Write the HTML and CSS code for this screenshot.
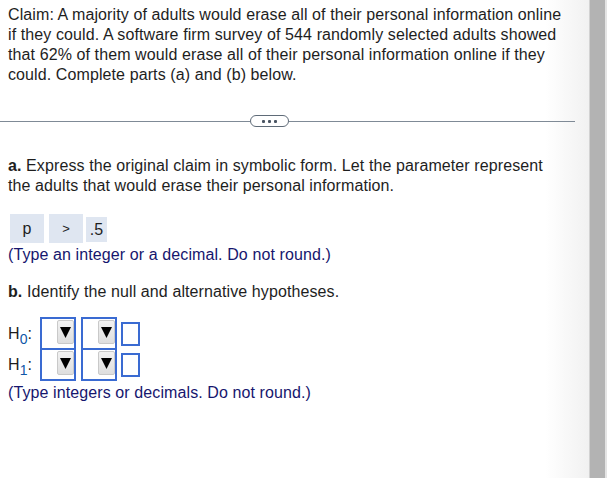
FILE: index.html
```html
<!DOCTYPE html>
<html>
<head>
<meta charset="utf-8">
<link rel="stylesheet" href="styles.css">
</head>
<body>
<div class="window">
  <main class="main">
    <p class="text claim">Claim: A majority of adults would erase all of their personal information online if they could. A software firm survey of 544 randomly selected adults showed that 62% of them would erase all of their personal information online if they could. Complete parts (a) and (b) below.</p>

    <div class="divider">
      <span class="rule rule-left"></span>
      <span class="more"><i></i><i></i><i></i></span>
      <span class="rule rule-right"></span>
    </div>

    <p class="text part-a"><b>a.</b> Express the original claim in symbolic form. Let the parameter represent the adults that would erase their personal information.</p>

    <div class="answer">
      <span class="chip chip-p">p</span>
      <span class="chip chip-op">&gt;</span>
      <span class="chip chip-val">.5</span>
    </div>
    <p class="text hint">(Type an integer or a decimal. Do not round.)</p>

    <p class="text part-b"><b>b.</b> Identify the null and alternative hypotheses.</p>

    <div class="hyp">
      <div class="hrow">
        <span class="hlabel">H<sub>0</sub>:</span>
        <span class="select"><span class="btn"><svg width="11" height="11" viewBox="0 0 11 11"><polygon points="0,0 11,0 5.5,11" fill="#000"/></svg></span></span>
        <span class="select"><span class="btn"><svg width="11" height="11" viewBox="0 0 11 11"><polygon points="0,0 11,0 5.5,11" fill="#000"/></svg></span></span>
        <span class="input"></span>
      </div>
      <div class="hrow hrow2">
        <span class="hlabel">H<sub>1</sub>:</span>
        <span class="select"><span class="btn"><svg width="11" height="11" viewBox="0 0 11 11"><polygon points="0,0 11,0 5.5,11" fill="#000"/></svg></span></span>
        <span class="select"><span class="btn"><svg width="11" height="11" viewBox="0 0 11 11"><polygon points="0,0 11,0 5.5,11" fill="#000"/></svg></span></span>
        <span class="input"></span>
      </div>
    </div>
    <p class="text hint hint2">(Type integers or decimals. Do not round.)</p>
  </main>
  <div class="scrollbar"><div class="thumb"></div></div>
</div>
</body>
</html>
```

FILE: styles.css
```css
html, body {
  margin: 0;
  padding: 0;
  background: #fff;
}
body {
  font-family: "Liberation Sans", Arial, sans-serif;
  font-size: 16px;
  line-height: 20px;
  letter-spacing: 0.1px;
  color: #1e1e1e;
}
.window {
  display: flex;
  width: 607px;
  height: 478px;
  overflow: hidden;
}
.main {
  flex: 1;
  min-width: 0;
  background: linear-gradient(to right, #ffffff 0, #ffffff 545px, #f1f1f1 589px);
}
.text {
  margin: 0;
  padding: 0 20px 0 8px;
}
.claim {
  margin-top: 5px;
  padding-right: 24px;
}
.divider {
  display: flex;
  align-items: center;
  width: 575px;
  margin-top: 30px;
  height: 12px;
}
.rule {
  height: 1px;
  background: #7f8a96;
}
.rule-left { width: 250px; }
.rule-right { flex: 1; }
.more {
  box-sizing: border-box;
  width: 39px;
  height: 12px;
  border: 1px solid #5f6b78;
  border-radius: 6px;
  display: flex;
  align-items: center;
  justify-content: center;
  gap: 3px;
  background: #fff;
}
.more i {
  display: block;
  width: 3px;
  height: 3px;
  background: #4a5563;
  border-radius: 1px;
}
.part-a {
  margin-top: 29px;
  padding-right: 30px;
}
.answer {
  display: flex;
  align-items: flex-start;
  margin-top: 18px;
  padding-left: 10px;
}
.chip {
  display: flex;
  align-items: center;
  justify-content: center;
  background: #dfe6f1;
  color: #1e1e1e;
  height: 29px;
}
.chip-p { width: 34px; }
.chip-op { width: 34px; margin-left: 5px; font-size: 13px; }
.chip-val { width: 21px; height: 25px; margin-left: 3px; margin-top: 3px; }
.hint {
  color: #16166e;
  margin-top: 2px;
}
.part-b {
  margin-top: 17px;
}
.hyp {
  margin-top: 15px;
}
.hrow {
  display: flex;
  align-items: center;
  height: 33px;
}
.hrow2 {
  margin-top: -2px;
}
.hlabel {
  width: 32px;
  padding-left: 8px;
  color: #1e1e1e;
  font-size: 16px;
  white-space: nowrap;
}
.hlabel sub {
  font-size: 14px;
  vertical-align: -5px;
  line-height: 0;
  color: #0f57a8;
}
.select {
  box-sizing: border-box;
  width: 36px;
  height: 33px;
  border: 2px solid #3a6bd2;
  display: flex;
  justify-content: flex-end;
  align-items: flex-start;
  margin-right: 5px;
  background: #fff;
}
.btn {
  box-sizing: border-box;
  width: 17px;
  height: 24px;
  margin-top: 1px;
  border: 1px solid #c9c9c9;
  border-radius: 2px;
  background: linear-gradient(#f2f2f2, #dedede);
  display: flex;
  align-items: center;
  justify-content: center;
}
.input {
  box-sizing: border-box;
  width: 19px;
  height: 24px;
  border: 2px solid #3a6bd2;
  margin-left: -1px;
  background: #fff;
}
.hint2 {
  margin-top: 2px;
}
.scrollbar {
  width: 18px;
  height: 100%;
  background: #e4e4e4;
  display: flex;
}
.thumb {
  width: 16px;
  height: 100%;
  box-sizing: border-box;
  border-left: 1px solid #d2d2d2;
  background: #b3b3b3;
}
```
